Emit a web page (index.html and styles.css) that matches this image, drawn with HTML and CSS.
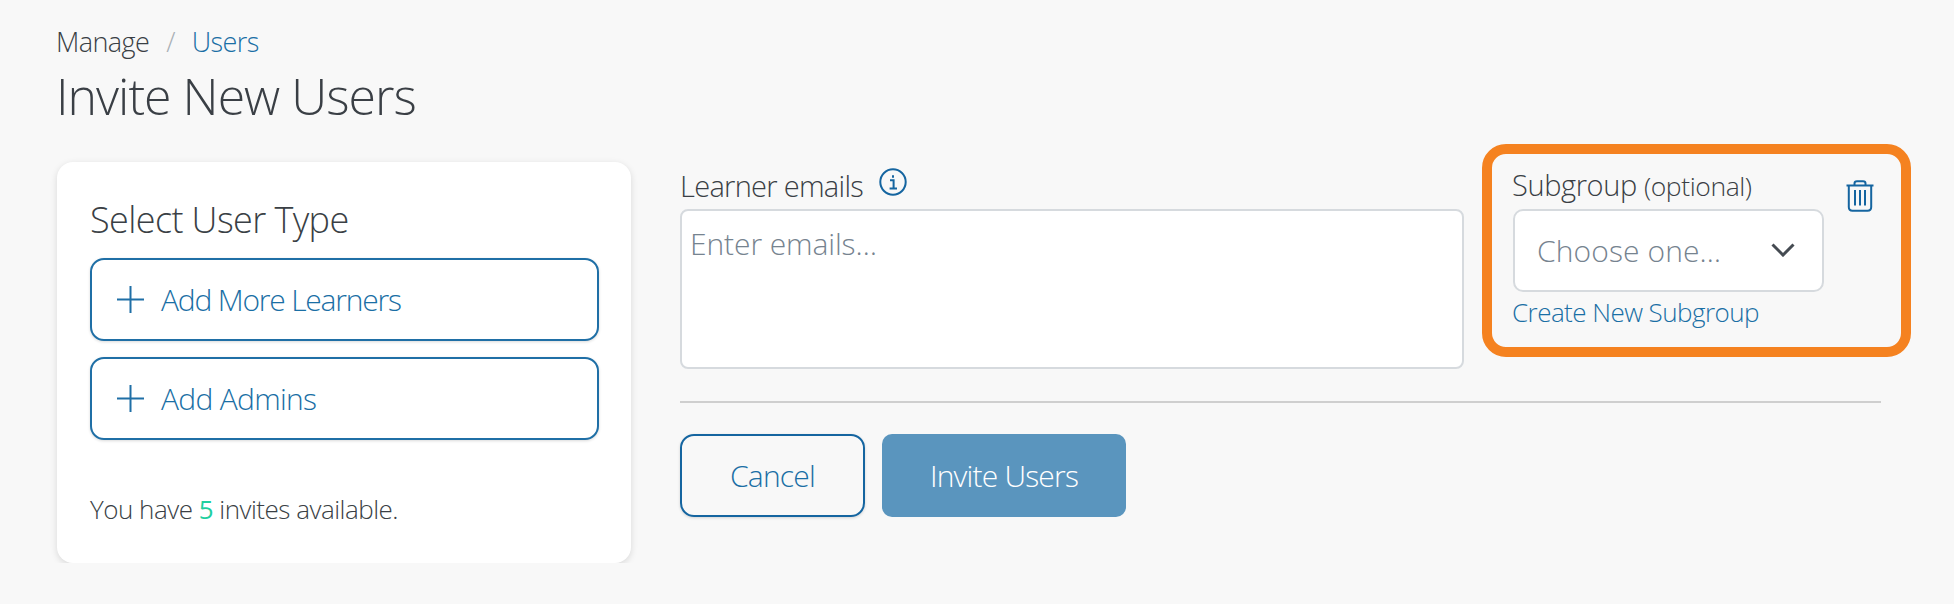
FILE: index.html
```html
<!DOCTYPE html>
<html>
<head>
    <title>Invite New Users</title>
    <link rel="stylesheet" href="styles.css">
    <meta charset="UTF-8">
</head>
<body>
    <div class="page">
        <div class="breadcrumb">
            <span>Manage</span>
            <span class="crumb-sep">/</span>
            <a href="#">Users</a>
        </div>
        <h1>Invite New Users</h1>

        <div class="content">
            <div class="card">
                <h2>Select User Type</h2>
                <button class="add-button add-learners">
                    <svg class="plus-icon" viewBox="0 0 27 27"><path d="M13.5 0V27M0 13.5H27"/></svg>
                    Add More Learners
                </button>
                <button class="add-button">
                    <svg class="plus-icon" viewBox="0 0 27 27"><path d="M13.5 0V27M0 13.5H27"/></svg>
                    Add Admins
                </button>
                <p class="invites">You have <b>5</b> invites available.</p>
            </div>

            <div class="invite-form">
                <div class="fields">
                    <div class="email-field">
                        <label class="field-label">
                            Learner emails
                            <svg class="info-icon" viewBox="0 0 28 28">
                                <circle cx="14" cy="14" r="12.7"/>
                                <path d="M11 12.2H14.6V20.4M10.6 20.6H18"/>
                                <path d="M14 7.2V9.8"/>
                            </svg>
                        </label>
                        <textarea placeholder="Enter emails…"></textarea>
                    </div>

                    <div class="subgroup-box">
                        <div class="subgroup-main">
                            <label class="field-label">Subgroup <small>(optional)</small></label>
                            <div class="select-box">
                                <span>Choose one…</span>
                                <svg class="chevron" viewBox="0 0 24 14"><path d="M1.5 1.5L12 12L22.5 1.5"/></svg>
                            </div>
                            <a class="new-subgroup" href="#">Create New Subgroup</a>
                        </div>
                        <svg class="trash-icon" viewBox="0 0 28 32">
                            <path d="M0.5 5.5H27.5"/>
                            <path d="M8.5 5V3.5Q8.5 1.2 11 1.2H17Q19.5 1.2 19.5 3.5V5"/>
                            <path d="M2.8 5.5V27Q2.8 30.8 6.5 30.8H21.5Q25.2 30.8 25.2 27V5.5"/>
                            <path d="M9 10V25.5M14 10V25.5M19 10V25.5"/>
                        </svg>
                    </div>
                </div>

                <hr>

                <div class="actions">
                    <button class="cancel-button">Cancel</button>
                    <button class="invite-button">Invite Users</button>
                </div>
            </div>
        </div>
    </div>
</body>
</html>
```

FILE: styles.css
```css
body {
    font-family: "Open Sans", "Noto Sans", sans-serif;
    font-weight: 300;
    background-color: #f8f8f8;
    color: #3a3f45;
    margin: 0;
    padding: 0;
}

a {
    color: #1a6fa5;
    text-decoration: none;
}

.page {
    padding: 25px 73px 0 57px;
}

.breadcrumb {
    display: flex;
    gap: 17px;
    margin-left: -1px;
    font-size: 27px;
    line-height: 34px;
    letter-spacing: -0.6px;
}

.crumb-sep {
    color: #a9b0b6;
}

h1 {
    margin: 3px 0 0 -1px;
    font-size: 50px;
    line-height: 68px;
    font-weight: 300;
    letter-spacing: -1px;
}

.content {
    display: flex;
    margin-top: 32px;
    gap: 49px;
    align-items: flex-start;
}

.card {
    box-sizing: border-box;
    width: 574px;
    height: 401px;
    flex-shrink: 0;
    padding: 32px 33px 0;
    background-color: #fff;
    border-radius: 16px;
    box-shadow: 0 2px 7px rgba(0, 0, 0, 0.13);
}

.card h2 {
    margin: 0 0 13px;
    font-size: 36px;
    line-height: 51px;
    font-weight: 300;
    letter-spacing: -0.6px;
}

.add-button {
    display: flex;
    align-items: center;
    gap: 17px;
    box-sizing: border-box;
    width: 509px;
    height: 83px;
    margin-bottom: 16px;
    padding: 0 0 0 25px;
    background-color: #fff;
    border: 2px solid #1f6fa6;
    border-radius: 14px;
    box-shadow: 0 1px 3px rgba(0, 0, 0, 0.15);
    color: #1a6fa5;
    font-family: inherit;
    font-weight: 300;
    font-size: 30px;
    letter-spacing: -0.7px;
}

.add-learners {
    letter-spacing: -1.2px;
}

.plus-icon {
    width: 27px;
    height: 27px;
    fill: none;
    stroke: #1f6fa6;
    stroke-width: 2;
}

.invites {
    margin: 52px 0 0;
    font-size: 26px;
    line-height: 34px;
    letter-spacing: -0.5px;
}

.invites b {
    font-weight: 500;
    color: #1fcf9f;
}

.invite-form {
    flex: 1;
    min-width: 0;
}

.fields {
    display: flex;
    gap: 18px;
    margin-top: -18px;
}

.email-field {
    flex: 1;
    padding-top: 18px;
}

.field-label {
    display: flex;
    align-items: center;
    gap: 16px;
    height: 47px;
    font-size: 29px;
    letter-spacing: -0.7px;
}

.info-icon {
    width: 28px;
    height: 28px;
    fill: none;
    stroke: #1565a0;
    stroke-width: 2;
    margin-bottom: 8px;
}

textarea {
    display: block;
    box-sizing: border-box;
    width: 100%;
    height: 160px;
    padding: 13px 8px;
    background-color: #fff;
    border: 2px solid #d6dade;
    border-radius: 8px;
    font-family: inherit;
    font-weight: 300;
    font-size: 30px;
    line-height: 40px;
    letter-spacing: -0.1px;
    resize: none;
}

textarea::placeholder {
    color: #76838f;
    opacity: 1;
}

.subgroup-box {
    display: flex;
    box-sizing: border-box;
    width: 429px;
    height: 213px;
    margin-right: -30px;
    padding: 8px 0 0 21px;
    border: 10px solid #f58220;
    border-radius: 24px;
}

.subgroup-main {
    width: 311px;
}

.subgroup-main .field-label {
    display: block;
    margin-left: -1px;
    line-height: 45px;
    letter-spacing: -0.4px;
}

.field-label small {
    font-size: 26.5px;
}

.select-box {
    display: flex;
    align-items: center;
    justify-content: space-between;
    box-sizing: border-box;
    height: 83px;
    padding: 0 27px 0 22px;
    background-color: #fff;
    border: 2px solid #d6dade;
    border-radius: 10px;
    color: #76838f;
    font-size: 30px;
    letter-spacing: 0.1px;
}

.chevron {
    width: 24px;
    height: 14px;
    margin-bottom: 2px;
    fill: none;
    stroke: #454b52;
    stroke-width: 3;
}

.new-subgroup {
    display: block;
    margin: 2px 0 0 -1px;
    font-size: 26px;
    line-height: 36px;
    letter-spacing: -0.55px;
}

.trash-icon {
    width: 28px;
    height: 32px;
    margin: 18px 0 0 22px;
    flex-shrink: 0;
    fill: none;
    stroke: #1565a0;
    stroke-width: 2;
}

hr {
    margin: 32px 0 31px;
    border: none;
    border-top: 2px solid #cfcfcf;
}

.actions {
    display: flex;
    gap: 17px;
}

.actions button {
    box-sizing: border-box;
    height: 83px;
    font-family: inherit;
    font-weight: 300;
    font-size: 30px;
    letter-spacing: -0.8px;
}

.cancel-button {
    width: 185px;
    background-color: transparent;
    border: 2px solid #1565a0;
    border-radius: 14px;
    color: #1a6fa5;
    box-shadow: 0 1px 3px rgba(0, 0, 0, 0.15);
}

.invite-button {
    width: 244px;
    background-color: #5a95be;
    border: none;
    border-radius: 10px;
    color: #fff;
}
```
